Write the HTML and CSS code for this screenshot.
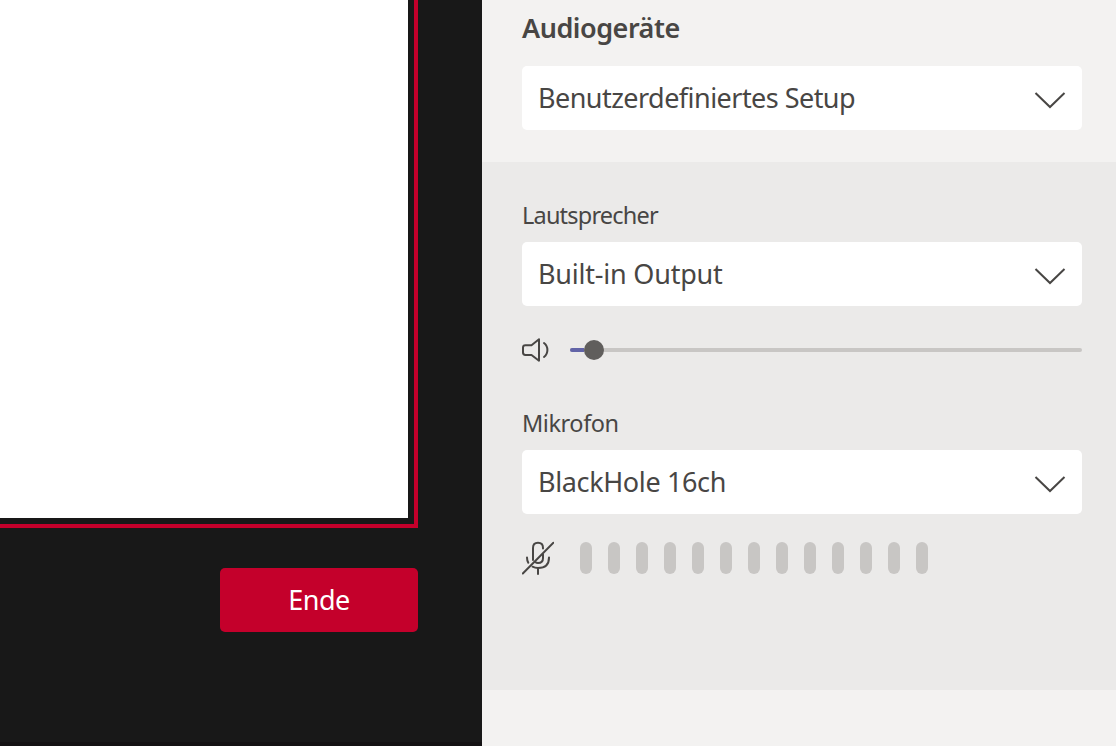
FILE: index.html
```html
<!DOCTYPE html>
<html lang="de">
<head>
<meta charset="utf-8">
<title>Audiogeräte</title>
<link rel="stylesheet" href="styles.css">
</head>
<body>
<main class="app">
  <section class="stage">
    <div class="share-frame"><div class="share-content"></div></div>
    <button class="end-button"><span class="t-end">Ende</span></button>
  </section>
  <aside class="panel">
    <div class="setup">
      <h1 class="heading"><span class="t-heading">Audiogeräte</span></h1>
      <div class="select"><span class="t-setup">Benutzerdefiniertes Setup</span>
        <svg class="chevron" viewBox="0 0 32 20"><path d="M1.5 3 L16 17 L30.5 3"/></svg></div>
    </div>
    <div class="devices">
      <div class="label"><span class="t-speaker">Lautsprecher</span></div>
      <div class="select"><span class="t-output">Built-in Output</span>
        <svg class="chevron" viewBox="0 0 32 20"><path d="M1.5 3 L16 17 L30.5 3"/></svg></div>
      <div class="volume">
        <svg class="speaker-icon" viewBox="0 0 28 28"><path d="M17 3.3 L9.5 9.2 H3.4 Q1 9.2 1 11.6 V16.6 Q1 19 3.4 19 H9.5 L17 24.7 Z"/><path d="M22 7 Q25.4 9.6 25.4 14 Q25.4 18.4 22 21"/></svg>
        <div class="track"><div class="fill"></div><div class="thumb"></div></div>
      </div>
      <div class="label"><span class="t-mic">Mikrofon</span></div>
      <div class="select"><span class="t-input">BlackHole 16ch</span>
        <svg class="chevron" viewBox="0 0 32 20"><path d="M1.5 3 L16 17 L30.5 3"/></svg></div>
      <div class="level">
        <svg class="mic-icon" viewBox="0 0 32 34"><path d="M11 19 V7 Q11 1.8 16 1.8 Q21 1.8 21 7 V7.5"/><path d="M21 13.5 V17 Q21 22 16 22 Q14.5 22 13.3 21.2"/><path d="M5 16.5 Q5 19.5 6.3 21.7"/><path d="M27 16.5 Q27 27 16 27 Q13 27 10.5 25.7"/><path d="M16 27 V33"/><path d="M.8 32.5 L31.4 1.8"/></svg>
        <div class="bars"><i></i><i></i><i></i><i></i><i></i><i></i><i></i><i></i><i></i><i></i><i></i><i></i><i></i></div>
      </div>
    </div>
  </aside>
</main>
</body>
</html>
```
FILE: styles.css
```css
* { box-sizing: border-box; }
body { margin: 0; font-family: "Noto Sans", sans-serif; color: #484644; }
.app { display: flex; width: 1116px; height: 746px; overflow: hidden; background: #f3f2f1; }
.stage { width: 482px; background: #181818; border-bottom: 4px solid #141213; }
.share-frame { width: 418px; height: 528px; padding: 0 6px 6px 0; border: solid #c4002b; border-width: 0 4px 4px 0; }
.share-content { height: 518px; background: #fff; }
.end-button { display: flex; align-items: center; justify-content: center; width: 198px; height: 64px; margin: 40px 0 0 220px; padding: 0 0 2px; border: 0; border-radius: 5px; background: #c4002b; color: #fff; font: 27px "Noto Sans", sans-serif; }
.panel { width: 634px; }
.setup { height: 162px; padding: 8px 34px 0 40px; }
.heading { height: 58px; margin: 0; font-size: 27px; line-height: 40px; font-weight: 600; }
.select { display: flex; align-items: center; justify-content: space-between; height: 64px; padding: 0 16px; border-radius: 5px; background: #fff; font-size: 27px; white-space: nowrap; }
.select span { padding-bottom: 2px; }
.chevron { width: 32px; height: 20px; margin-top: 4px; fill: none; stroke: #484644; stroke-width: 2; }
.devices { height: 528px; padding: 36px 34px 0 40px; background: #ebeae9; }
.label { height: 44px; font-size: 23.5px; line-height: 34px; }
.volume { display: flex; align-items: center; height: 88px; margin-bottom: 12px; }
.speaker-icon { width: 28px; height: 28px; margin-right: 20px; fill: none; stroke: #484644; stroke-width: 2; stroke-linejoin: round; stroke-linecap: round; }
.track { display: flex; align-items: center; width: 512px; height: 4px; border-radius: 2px; background: #c8c6c4; }
.fill { width: 14px; height: 4px; border-radius: 2px 0 0 2px; background: #6264a7; }
.thumb { width: 20px; height: 20px; border-radius: 50%; background: #605e5c; }
.level { display: flex; height: 60px; padding-top: 28px; }
.mic-icon { width: 32px; height: 34px; margin: -1px 26px 0 0; fill: none; stroke: #484644; stroke-width: 2; stroke-linecap: round; }
.bars { display: flex; gap: 16px; }
.bars i { width: 12px; height: 32px; border-radius: 6px; background: #c8c6c4; }
.t-end { letter-spacing: -.5px; }
.t-heading { letter-spacing: -.48px; }
.t-setup { letter-spacing: -.54px; font-variant-ligatures: none; }
.t-speaker { letter-spacing: -.8px; }
.t-output { letter-spacing: -.22px; }
.t-mic { letter-spacing: -.45px; }
.t-input { letter-spacing: -.37px; }
```
